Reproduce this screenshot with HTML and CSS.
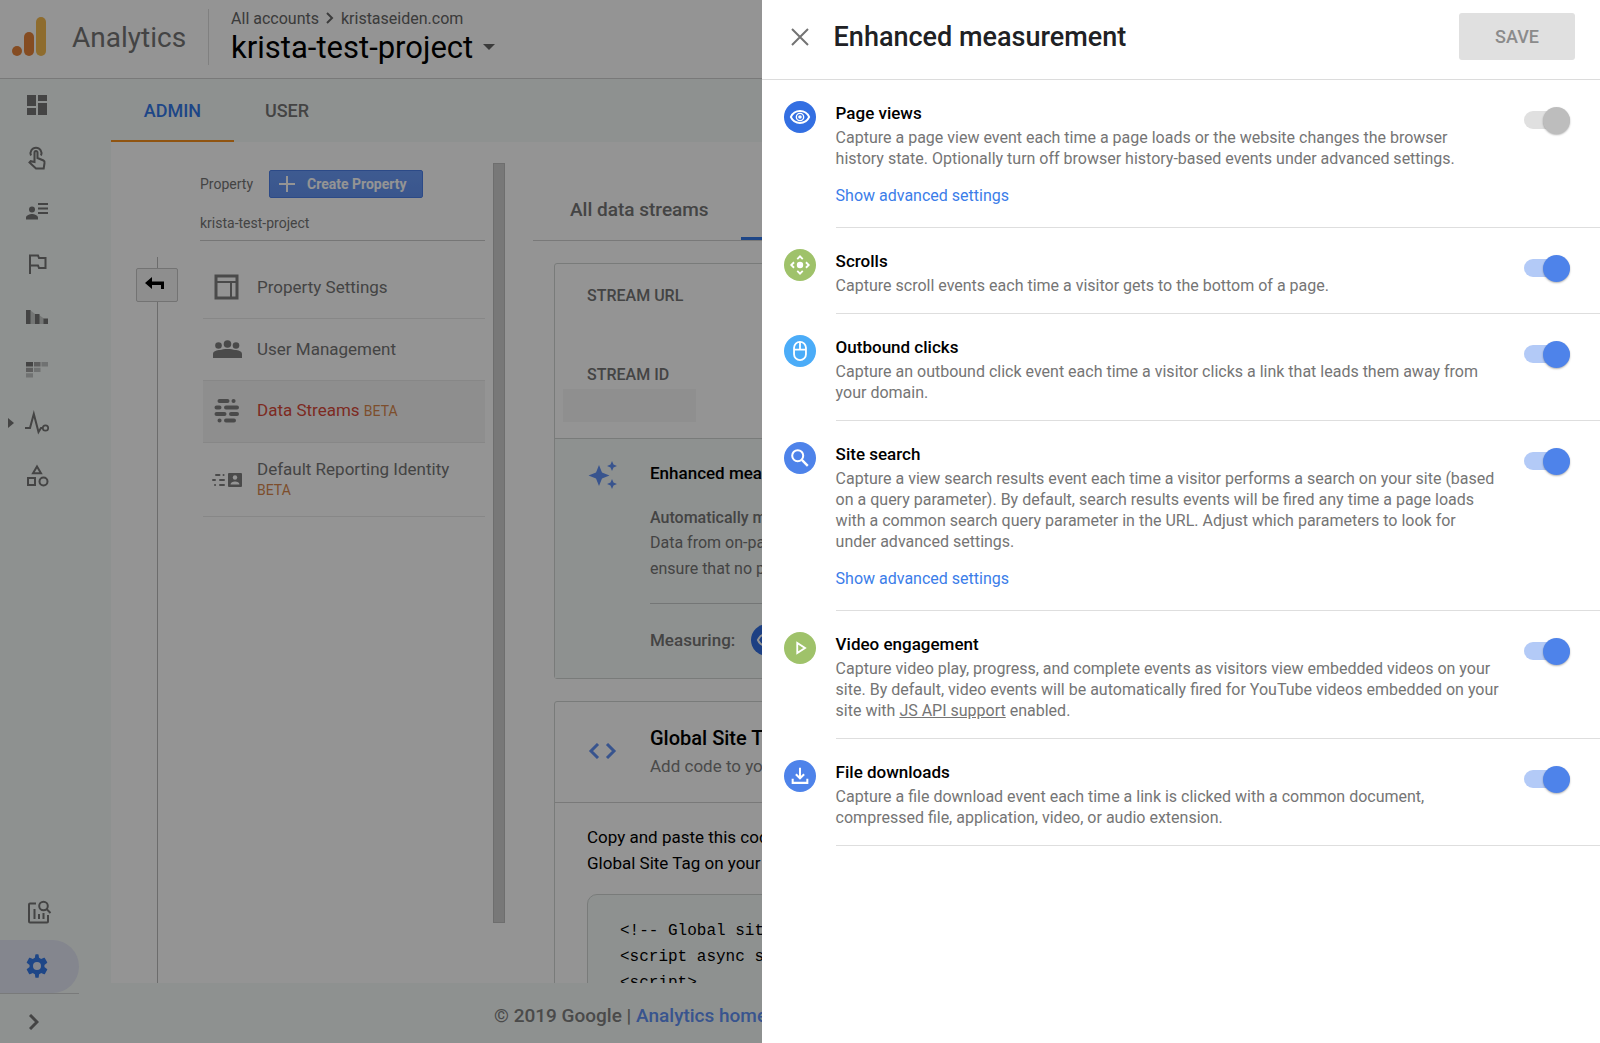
FILE: index.html
```html
<!DOCTYPE html>
<html lang="en">
<head>
    <meta charset="UTF-8">
    <meta name="viewport" content="width=device-width, initial-scale=1.0">
    <title>Analytics - Enhanced measurement</title>
    <link rel="stylesheet" href="styles.css">
</head>
<body>
    <div class="page">
        <header class="topbar">
            <svg class="logo" width="34" height="40" viewBox="0 0 34 40">
                <circle cx="5" cy="34" r="5" fill="#e6843c"/>
                <rect x="12" y="15" width="10" height="24" rx="5" fill="#e6843c"/>
                <rect x="24" y="0" width="10" height="39" rx="5" fill="#f5ba50"/>
            </svg>
            <span class="brand">Analytics</span>
            <div class="account">
                <div class="crumbs">All accounts
                    <svg width="8" height="12" viewBox="0 0 8 12"><path d="M1 1l5 5-5 5" fill="none" stroke="#666" stroke-width="2"/></svg>
                    kristaseiden.com</div>
                <button class="project">krista-test-project
                    <svg width="12" height="6" viewBox="0 0 12 6"><path d="M0 0h12L6 6z" fill="#666"/></svg>
                </button>
            </div>
        </header>

        <div class="body">
            <nav class="sidebar">
                <a href="#" aria-label="Home"><svg viewBox="0 0 24 24"><path d="M2 2h9v11H2zM13 2h9v6h-9zM2 15h9v7H2zM13 10h9v12h-9z"/></svg></a>
                <a href="#" aria-label="Customization"><svg viewBox="0 0 24 24"><g fill="none" stroke="#757575" stroke-width="2"><path d="M6 9.500a5.500 5.500 0 1 1 10 0"/><path d="M9.500 16V6.500a1.500 1.500 0 0 1 3 0V12l6 2.500c1 .5 1.300 1.200 1 2.500l-.8 5.500H11L4.500 16.500l1.200-1.300z"/></g></svg></a>
                <a href="#" aria-label="Audience"><svg viewBox="0 0 24 24"><circle cx="7" cy="10.500" r="3"/><path d="M1 20.500v-2c0-2 4-3.500 6-3.500s6 1.500 6 3.500v2zM13 4h10v2H13zM13 8.500h10v2H13zM13 13h10v2H13z"/></svg></a>
                <a href="#" aria-label="Flag"><svg viewBox="0 0 24 24"><path d="M5 22V3.500h8l1 2.500h6.500v10H14l-1-2.500H5" fill="none" stroke="#757575" stroke-width="2"/></svg></a>
                <a href="#" aria-label="Funnel"><svg viewBox="0 0 24 24"><path d="M5 5l5 4v10H5zM14 10l5 3.500V19h-5z" opacity=".35"/><path d="M1 5h4.500v14H1zM10 9h4.500v10H10zM18.500 13.500H23V19h-4.500z"/></svg></a>
                <a href="#" aria-label="Cohorts"><svg viewBox="0 0 24 24"><path d="M1 4h7v4.500H1z"/><path d="M9 4h6.500v4.500H9zM1 9.700h7V14H1z" opacity=".65"/><path d="M16.500 4H23v4.500h-6.500zM9 9.700h6.500V14H9zM1 15.200h7v4.300H1z" opacity=".4"/></svg></a>
                <a href="#" class="expandable" aria-label="Behavior"><svg viewBox="0 0 24 24"><path d="M0 17h5l3.800-14 4.700 18 2.500-4h2" fill="none" stroke="#757575" stroke-width="2"/><circle cx="20.500" cy="17" r="2.700" fill="none" stroke="#757575" stroke-width="1.700"/></svg></a>
                <a href="#" aria-label="Conversions"><svg viewBox="0 0 24 24"><g fill="none" stroke="#757575" stroke-width="2"><path d="M12 2.500l4 6.800H8z"/><path d="M3 14h7v7H3z"/><circle cx="18.500" cy="17.500" r="4"/></g></svg></a>
                <a href="#" class="first-bottom" aria-label="Analysis"><svg viewBox="0 0 24 24"><g fill="none" stroke="#757575" stroke-width="2"><path d="M11 2.500H5Q4 2.500 4 3.500v17q0 1 1 1h17q1 0 1-1V14M9.500 8v10M14 13v5M18.500 12v6"/><circle cx="18.500" cy="5" r="4.300"/><path d="M21.500 8l4 4"/></g></svg></a>
                <a href="#" class="active" aria-label="Admin"><svg viewBox="0 0 24 24"><path d="M19.400 13c0-.3.100-.6.100-1s0-.7-.1-1l2.600-2c.2-.2.300-.5.200-.8l-2.400-4.200c-.2-.3-.5-.4-.8-.2l-3 1.200c-.6-.5-1.300-.9-2-1.200L13.600.8c0-.4-.3-.6-.6-.6h-2c-.4 0-.6.200-.7.600L9.900 3.800c-.7.300-1.400.7-2 1.200l-3-1.200c-.3-.1-.6 0-.8.200L1.800 8.200c-.2.300-.1.600.2.800l2.600 2c0 .3-.1.700-.1 1s0 .7.100 1L2 15c-.2.200-.3.500-.2.800l2.300 4.200c.2.300.5.400.8.200l3-1.200c.6.500 1.300.9 2 1.200l.4 3c.1.400.3.600.7.600h2c.4 0 .6-.2.700-.6l.4-3c.7-.3 1.400-.7 2-1.200l3 1.200c.3.100.6 0 .8-.2l2.300-4.200c.2-.3.100-.6-.2-.8zM12 16a4 4 0 1 1 0-8 4 4 0 0 1 0 8z"/></svg></a>
                <button class="expand" aria-label="Expand menu"><svg width="10" height="16" viewBox="0 0 10 16"><path d="M1 1l7 7-7 7" fill="none" stroke="#757575" stroke-width="3"/></svg></button>
            </nav>

            <div class="main">
                <div class="tabs">
                    <a href="#" class="tab selected">ADMIN</a>
                    <a href="#" class="tab">USER</a>
                </div>

                <div class="panel">
                    <div class="rail">
                        <button class="back" aria-label="Back"><svg width="20" height="14" viewBox="0 0 20 14"><path d="M0 6l7-6v4.500h12V12h-3V8H7v4z"/></svg></button>
                    </div>

                    <div class="property">
                        <div class="property-head">
                            <span>Property</span>
                            <button class="create"><svg width="16" height="16" viewBox="0 0 16 16"><path d="M8 0v16M0 8h16" stroke="#fff" stroke-width="2"/></svg>Create Property</button>
                        </div>
                        <div class="property-name">krista-test-project</div>
                        <div class="menu">
                            <a href="#"><svg width="30" height="26" viewBox="0 0 30 26"><g fill="none" stroke="#808080"><path d="M4 2h21v22H4z" stroke-width="3"/><path d="M4 8h21M19 8v16" stroke-width="2"/></g></svg><span>Property Settings</span></a>
                            <a href="#"><svg width="30" height="26" viewBox="0 0 30 26"><g fill="#808080"><circle cx="6.500" cy="9.500" r="3.300"/><circle cx="15.500" cy="8" r="3.800"/><circle cx="24" cy="9.500" r="3.300"/><path d="M1 22v-4c0-3 4-4 7-4 3-1.500 12-1.500 15 0 3 0 7 1 7 4v4z"/></g></svg><span>User Management</span></a>
                            <a href="#" class="current"><svg width="30" height="26" viewBox="0 0 30 26"><path d="M7.500 3h8M21.500 3h.1M4.500 9.500h3M14 9.500h11M4.500 16h8M19 16h6M7.500 22.500h.1M14 22.500h8" stroke="#808080" stroke-width="4" stroke-linecap="round"/></svg><span>Data Streams <small>BETA</small></span></a>
                            <a href="#" class="tall"><svg width="30" height="26" viewBox="0 0 30 26"><path d="M4 8h3.500M11.500 8h.1M1 13h2M8 13h4M3 18h.1M8 18h4" stroke="#808080" stroke-width="2" stroke-linecap="round"/><rect x="16" y="6" width="14" height="14" rx="1" fill="#808080"/><circle cx="23" cy="10.500" r="2.200" fill="#fff"/><path d="M18.500 17.500c0-4 9-4 9 0z" fill="#fff"/></svg><span>Default Reporting Identity<br><small>BETA</small></span></a>
                        </div>
                    </div>

                    <div class="scrollbar"></div>

                    <div class="streams">
                        <div class="stream-tabs">
                            <a href="#">All data streams</a>
                            <a href="#" class="selected" aria-label="Stream details"></a>
                        </div>
                        <section class="card">
                            <div class="stream-info">
                                <div class="caption">STREAM URL</div>
                                <div class="caption">STREAM ID</div>
                                <div class="redacted"></div>
                            </div>
                            <div class="enhanced">
                                <svg width="30" height="30" viewBox="0 0 30 30"><path fill="#6191f5" d="M11 4l3 7.500 7.500 3-7.500 3-3 7.500-3-7.500-7.500-3 7.500-3zM24 0l1.500 3.500L29 5l-3.500 1.500L24 10l-1.500-3.500L19 5l3.500-1.500zM24 18l1.500 3.500L29 23l-3.500 1.500L24 28l-1.500-3.500L19 23l3.500-1.500z"/></svg>
                                <div class="enhanced-text">
                                    <h3>Enhanced measurement</h3>
                                    <p class="strong">Automatically measure</p>
                                    <p>Data from on-page<br>ensure that no personal</p>
                                    <div class="measuring">Measuring:
                                        <span class="badge badge-view"><svg viewBox="0 0 24 24"><use href="#icon-eye"/></svg></span>
                                    </div>
                                </div>
                            </div>
                        </section>
                        <section class="card">
                            <div class="tag-head">
                                <svg width="30" height="16" viewBox="0 0 30 16"><path d="M10 1L3 8l7 7M19 1l7 7-7 7" fill="none" stroke="#6191f5" stroke-width="3"/></svg>
                                <div>
                                    <h2>Global Site Tag</h2>
                                    <p>Add code to your</p>
                                </div>
                            </div>
                            <div class="tag-body">
                                <p>Copy and paste this code<br>Global Site Tag on your</p>
                                <pre>&lt;!-- Global site
&lt;script async src
&lt;script&gt;</pre>
                            </div>
                        </section>
                    </div>
                </div>

                <footer class="footer">© 2019 Google | <a href="#">Analytics home</a></footer>
            </div>
        </div>
    </div>

    <div class="backdrop"></div>

    <aside class="drawer">
        <div class="drawer-head">
            <button class="close" aria-label="Close"><svg width="18" height="18" viewBox="0 0 18 18"><path d="M1 1l16 16M17 1L1 17" stroke="#737373" stroke-width="2"/></svg></button>
            <h1>Enhanced measurement</h1>
            <button class="save" disabled>SAVE</button>
        </div>

        <div class="event">
            <span class="badge badge-view"><svg viewBox="0 0 24 24"><g id="icon-eye" fill="none" stroke="#fff" stroke-width="2"><path d="M2 12c4-8.700 16-8.700 20 0-4 8.700-16 8.700-20 0z"/><circle cx="12" cy="12" r="4" stroke-width="1.500"/><circle cx="12" cy="12" r="2" fill="#fff" stroke="none"/></g></svg></span>
            <div class="event-body">
                <div class="event-text">
                    <label for="page-views">Page views</label>
                    <p>Capture a page view event each time a page loads or the website changes the browser<br>history state. Optionally turn off browser history-based events under advanced settings.</p>
                    <a href="#" class="advanced">Show advanced settings</a>
                </div>
                <input type="checkbox" class="toggle" id="page-views" checked disabled>
            </div>
        </div>

        <div class="event">
            <span class="badge badge-green"><svg viewBox="0 0 24 24"><circle cx="12" cy="12" r="3.500" fill="#fff"/><path d="M9 5.500l3-3 3 3M9 18.500l3 3 3-3M5.500 9l-3 3 3 3M18.500 9l3 3-3 3" fill="none" stroke="#fff" stroke-width="2"/></svg></span>
            <div class="event-body">
                <div class="event-text">
                    <label for="scrolls">Scrolls</label>
                    <p>Capture scroll events each time a visitor gets to the bottom of a page.</p>
                </div>
                <input type="checkbox" class="toggle" id="scrolls" checked>
            </div>
        </div>

        <div class="event">
            <span class="badge badge-sky"><svg viewBox="0 0 24 24"><path d="M5.500 8.500a6.500 6.500 0 0 1 13 0v7a6.500 6.500 0 0 1-13 0zM5.500 10.500h13M12 2v8.500" fill="none" stroke="#fff" stroke-width="2"/></svg></span>
            <div class="event-body">
                <div class="event-text">
                    <label for="outbound">Outbound clicks</label>
                    <p>Capture an outbound click event each time a visitor clicks a link that leads them away from your domain.</p>
                </div>
                <input type="checkbox" class="toggle" id="outbound" checked>
            </div>
        </div>

        <div class="event">
            <span class="badge badge-blue"><svg viewBox="0 0 24 24"><circle cx="9.500" cy="9.500" r="6" fill="none" stroke="#fff" stroke-width="2.200"/><path d="M14 14l6.500 6.500" stroke="#fff" stroke-width="2.600"/></svg></span>
            <div class="event-body">
                <div class="event-text">
                    <label for="search">Site search</label>
                    <p>Capture a view search results event each time a visitor performs a search on your site (based on a query parameter). By default, search results events will be fired any time a page loads with a common search query parameter in the URL. Adjust which parameters to look for<br>under advanced settings.</p>
                    <a href="#" class="advanced">Show advanced settings</a>
                </div>
                <input type="checkbox" class="toggle" id="search" checked>
            </div>
        </div>

        <div class="event">
            <span class="badge badge-green"><svg viewBox="0 0 24 24"><path d="M9 6.500v11l8.500-5.500z" fill="none" stroke="#fff" stroke-width="2"/></svg></span>
            <div class="event-body">
                <div class="event-text">
                    <label for="video">Video engagement</label>
                    <p>Capture video play, progress, and complete events as visitors view embedded videos on your site. By default, video events will be automatically fired for YouTube videos embedded on your site with <a href="#">JS API support</a> enabled.</p>
                </div>
                <input type="checkbox" class="toggle" id="video" checked>
            </div>
        </div>

        <div class="event">
            <span class="badge badge-blue"><svg viewBox="0 0 24 24"><path d="M12 3v11M7.500 10l4.500 4.500 4.500-4.500M4 15v4.500h16V15" fill="none" stroke="#fff" stroke-width="2.200"/></svg></span>
            <div class="event-body">
                <div class="event-text">
                    <label for="downloads">File downloads</label>
                    <p>Capture a file download event each time a link is clicked with a common document, compressed file, application, video, or audio extension.</p>
                </div>
                <input type="checkbox" class="toggle" id="downloads" checked>
            </div>
        </div>
    </aside>
</body>
</html>
```
FILE: styles.css
```css
* {
    margin: 0;
    padding: 0;
    box-sizing: border-box;
}

body {
    font-family: Roboto, "Liberation Sans", sans-serif;
    font-size: 16px;
    color: #000;
    overflow: hidden;
}

a {
    color: inherit;
    text-decoration: none;
}

button {
    font-family: inherit;
    border: none;
    background: none;
    cursor: pointer;
}

svg {
    flex-shrink: 0;
}

.page {
    display: flex;
    flex-direction: column;
    height: 100vh;
    background: #f5faf8;
}

/* Top bar */
.topbar {
    display: flex;
    align-items: center;
    height: 79px;
    flex-shrink: 0;
    padding: 0 12px 4px;
    background: #fff;
    border-bottom: 1px solid #d0d0d0;
}

.brand {
    margin-left: 26px;
    font-size: 28px;
    color: #757575;
}

.account {
    margin-left: 22px;
    padding-left: 22px;
    border-left: 1px solid #ddd;
}

.crumbs {
    line-height: 20px;
    color: #666;
}

.crumbs svg {
    margin: 0 3px;
}

.project {
    display: flex;
    align-items: center;
    gap: 10px;
    height: 36px;
    font-size: 31px;
}

.body {
    display: flex;
    flex: 1;
    min-height: 0;
}

/* Sidebar */
.sidebar {
    display: flex;
    flex-direction: column;
    width: 111px;
    flex-shrink: 0;
}

.sidebar a {
    position: relative;
    display: flex;
    align-items: center;
    width: 79px;
    height: 53px;
    padding: 0 0 2px 25px;
}

.sidebar a svg {
    width: 24px;
    height: 24px;
    fill: #757575;
    overflow: visible;
}

.sidebar .expandable::before {
    content: "";
    position: absolute;
    left: 8px;
    border: 5px solid transparent;
    border-left: 6px solid #757575;
    border-right: none;
}

.sidebar .first-bottom {
    margin-top: auto;
}

.sidebar .active {
    background: #e3e7f5;
    border-radius: 0 27px 27px 0;
}

.sidebar .active svg {
    fill: #3579e8;
}

.expand {
    display: flex;
    align-items: center;
    width: 79px;
    height: 50px;
    padding-left: 29px;
    padding-top: 6px;
    border-top: 1px solid #d0d3d3;
}

/* Main area */
.main {
    display: flex;
    flex-direction: column;
    flex: 1;
    min-width: 0;
}

.tabs {
    display: flex;
    height: 63px;
    flex-shrink: 0;
}

.tab {
    width: 123px;
    padding: 2px 0 0;
    line-height: 59px;
    text-align: center;
    font-size: 18px;
    font-weight: 500;
    color: #757575;
}

.tab:last-child {
    width: 106px;
}

.tab.selected {
    color: #3579e8;
    border-bottom: 2px solid #f9921e;
}

.panel {
    display: flex;
    flex: 1;
    min-height: 0;
    overflow: hidden;
    background: #fff;
}

.rail {
    display: flex;
    flex-direction: column;
    align-items: center;
    width: 42px;
    margin: 115px 0 0 25px;
    flex-shrink: 0;
}

.rail::before {
    content: "";
    width: 1px;
    height: 11px;
    background: #bbb;
}

.rail::after {
    content: "";
    width: 1px;
    flex: 1;
    background: #bbb;
}

.back {
    width: 42px;
    height: 34px;
    padding-right: 4px;
    background: #f5f5f5;
    border: 1px solid #c6c6c6;
    border-radius: 2px;
}

.property {
    width: 285px;
    margin-left: 22px;
    flex-shrink: 0;
    color: #757575;
}

.property-head {
    display: flex;
    align-items: center;
    gap: 16px;
    margin-top: 28px;
    font-size: 14px;
}

.create {
    display: flex;
    align-items: center;
    gap: 12px;
    height: 28px;
    padding: 0 15px 0 9px;
    font-size: 14px;
    font-weight: 700;
    color: #fff;
    background: linear-gradient(#6b9cfa, #6494f2);
    border: 1px solid #4d80e8;
    border-radius: 2px;
}

.property-name {
    padding: 14px 0 6px;
    font-size: 14px;
    line-height: 22px;
    border-bottom: 1px solid #ccc;
}

.menu {
    padding: 16px 0 0 3px;
}

.menu a {
    display: flex;
    align-items: center;
    gap: 15px;
    height: 62px;
    padding: 0 0 2px 9px;
    font-size: 17px;
    line-height: 20px;
    border-bottom: 1px solid #e8e8e8;
}

.menu .tall {
    height: 74px;
    padding-bottom: 0;
}

.menu small {
    font-size: 14px;
    color: #d8874c;
}

.menu .current {
    color: #d8493a;
    background: #f5f5f5;
}

.scrollbar {
    width: 12px;
    margin: 21px 0 60px 8px;
    background: #cfcfcf;
    border: 1px solid #bdbdbd;
    flex-shrink: 0;
}

/* Data streams */
.streams {
    flex: 1;
    min-width: 0;
    margin-left: 28px;
    white-space: nowrap;
}

.stream-tabs {
    display: flex;
    gap: 32px;
    height: 99px;
    padding-left: 37px;
    border-bottom: 1px solid #d0d0d0;
    font-size: 19px;
    font-weight: 500;
    color: #757575;
}

.stream-tabs a {
    padding: 56px 0 0;
}

.stream-tabs .selected {
    width: 240px;
    border-bottom: 3px solid #3579e8;
}

.card {
    margin: 22px 32px 0 21px;
    border: 1px solid #d0d5d3;
    border-radius: 3px;
}

.stream-info {
    height: 175px;
    padding: 22px 8px 0;
    border-bottom: 1px solid #d0d5d3;
}

.caption {
    height: 79px;
    padding-left: 24px;
    font-weight: 500;
    line-height: 20px;
    color: #757575;
}

.caption + .caption {
    height: 24px;
}

.redacted {
    width: 133px;
    height: 33px;
    background: #f7f7f7;
}

.enhanced {
    display: flex;
    gap: 32px;
    height: 239px;
    padding: 22px 0 0 33px;
    background: #f5faf8;
    color: #757575;
}

.enhanced-text {
    flex: 1;
    line-height: 26px;
}

.enhanced-text h3 {
    font-size: 17px;
    font-weight: 500;
    line-height: 24px;
    color: #000;
}

.enhanced-text .strong {
    margin-top: 21px;
    line-height: 24px;
    font-weight: 500;
}

.measuring {
    display: flex;
    align-items: center;
    gap: 16px;
    margin-top: 21px;
    padding-top: 20px;
    border-top: 1px solid #c8cccb;
    font-size: 17px;
    font-weight: 500;
}

.tag-head {
    display: flex;
    align-items: center;
    gap: 32px;
    height: 101px;
    padding: 0 0 3px 33px;
    border-bottom: 1px solid #d0d0d0;
}

.tag-head h2 {
    font-size: 20px;
    font-weight: 500;
    line-height: 30px;
}

.tag-head p {
    font-size: 17px;
    line-height: 26px;
    color: #808080;
}

.tag-body {
    padding: 21px 32px 0;
    font-size: 17px;
    line-height: 26px;
}

pre {
    height: 200px;
    margin-top: 18px;
    padding: 23px 32px;
    font-family: "Liberation Mono", monospace;
    font-size: 16px;
    background: #f5faf8;
    border: 1px solid #d0d5d3;
    border-radius: 10px;
}

.footer {
    height: 60px;
    flex-shrink: 0;
    padding-left: 383px;
    line-height: 66px;
    font-size: 19px;
    font-weight: 500;
    color: #808080;
    white-space: nowrap;
}

.footer a {
    color: #6191f5;
}

/* Drawer */
.backdrop {
    position: fixed;
    inset: 0;
    background: rgba(0, 0, 0, 0.42);
}

.drawer {
    position: fixed;
    top: 0;
    right: 0;
    bottom: 0;
    width: 52.4%;
    background: #fff;
    overflow: auto;
}

.drawer-head {
    display: flex;
    align-items: center;
    height: 80px;
    padding: 0 25px 6px 22px;
    border-bottom: 1px solid #dcdcdc;
}

.close {
    display: flex;
    align-items: center;
    justify-content: center;
    width: 32px;
    height: 32px;
}

.drawer-head h1 {
    flex: 1;
    margin-left: 18px;
    font-size: 27px;
    font-weight: 500;
    color: #202124;
}

.save {
    width: 116px;
    height: 47px;
    font-size: 18px;
    font-weight: 500;
    color: #8b8b8b;
    background: #e0e0e0;
    border-radius: 3px;
}

.event {
    display: flex;
    gap: 20px;
    padding-left: 22px;
}

.badge {
    display: flex;
    align-items: center;
    justify-content: center;
    width: 32px;
    height: 32px;
    flex-shrink: 0;
    border-radius: 50%;
}

.badge svg {
    width: 22px;
    height: 22px;
}

.event .badge {
    margin-top: 21px;
}

.badge-view {
    background: #336fe2;
}

.badge-green {
    background: #9fc26a;
}

.badge-sky {
    background: #4bacf8;
}

.badge-blue {
    background: #4e83ea;
}

.event-body {
    display: flex;
    justify-content: space-between;
    flex: 1;
    padding: 22px 30px 17px 0;
    border-bottom: 1px solid #dedede;
}

.event-text {
    max-width: 667px;
    line-height: 21px;
    color: #757575;
}

.event-text label {
    display: block;
    margin-bottom: 3px;
    font-size: 17px;
    font-weight: 500;
    line-height: 22px;
    color: #000;
}

.event-text p a {
    text-decoration: underline;
}

.event-text .advanced {
    display: block;
    margin: 16px 0 4px;
    color: #3b7de9;
}

.toggle {
    appearance: none;
    display: flex;
    align-items: center;
    width: 46px;
    height: 18px;
    margin-top: 9px;
    flex-shrink: 0;
    border-radius: 9px;
    background: #b3caf7;
    cursor: pointer;
}

.toggle::before {
    content: "";
    width: 27px;
    height: 27px;
    border-radius: 50%;
    background: #4e83ea;
    box-shadow: 0 1px 2px rgba(0, 0, 0, 0.3);
}

.toggle:checked::before {
    margin-left: auto;
}

.toggle:disabled {
    background: #e0e0e0;
}

.toggle:disabled::before {
    background: #bdbdbd;
}
```
